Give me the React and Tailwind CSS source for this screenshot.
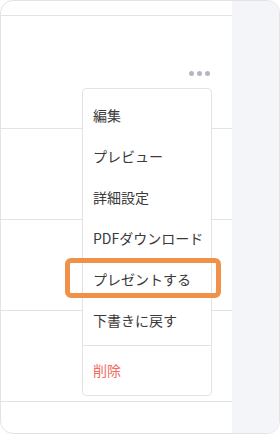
import React from 'react';

const items = ['編集', 'プレビュー', '詳細設定', 'PDFダウンロード', 'プレゼントする', '下書きに戻す'];

const App = () => {
  return (
    <div
      className="w-[280px] h-[434px] bg-white"
      style={{ fontFamily: '"Noto Sans CJK JP", "Noto Sans", sans-serif' }}
    >
      <div className="flex h-full w-full overflow-hidden rounded-[13px] border border-[#e3e3e3]">
        <div className="relative flex w-[231px] flex-col">
          <div className="h-[15px] border-b border-[#e3e3e3]" />
          <div className="flex h-[113px] items-start justify-end border-b border-[#e3e3e3] pr-[22px] pt-[55px]">
            <div className="flex gap-[3px]">
              <span className="h-[5px] w-[5px] rounded-full bg-[#b3b8c0]" />
              <span className="h-[5px] w-[5px] rounded-full bg-[#b3b8c0]" />
              <span className="h-[5px] w-[5px] rounded-full bg-[#b3b8c0]" />
            </div>
          </div>
          <div className="h-[91px] border-b border-[#e3e3e3]" />
          <div className="h-[91px] border-b border-[#e3e3e3]" />
          <div className="h-[91px] border-b border-[#e3e3e3]" />
          <div className="flex-1" />

          {/* dropdown */}
          <div className="absolute left-[81px] top-[87px] w-[130px] rounded-[4px] border border-[#e3e3e3] bg-white pt-[6px] pb-[4px]">
            {items.map((t) => (
              <div key={t} className="flex h-[41px] items-center pl-[10px] text-[14px] text-[#3a3a3a]">
                {t}
              </div>
            ))}
            <div className="my-[4px] h-px bg-[#e3e3e3]" />
            <div className="flex h-[41px] items-center pl-[10px] text-[14px] text-[#f26b5f]">削除</div>
          </div>

          {/* highlight */}
          <div className="absolute left-[64px] top-[257px] h-[40px] w-[156px] rounded-[6px] border-[5px] border-[#f0914a]" />
        </div>
        <div className="flex-1 bg-[#f4f5f9]" />
      </div>
    </div>
  );
};

export default App;
